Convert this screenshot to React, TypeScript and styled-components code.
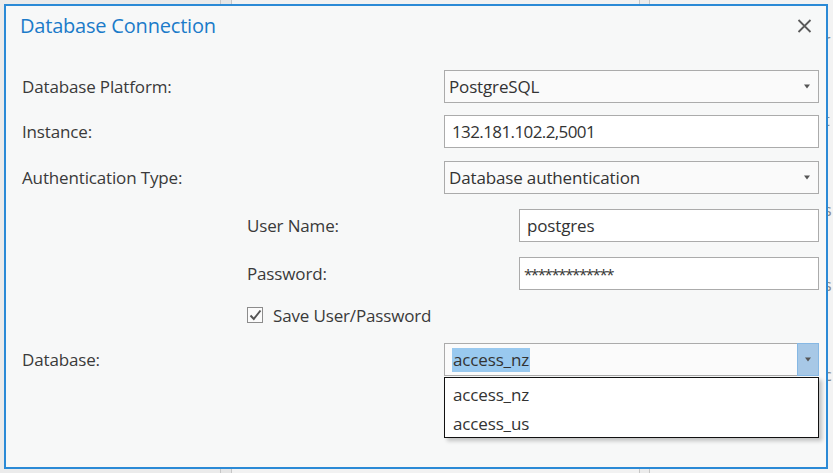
import React from "react";
import styled, { createGlobalStyle } from "styled-components";

const Global = createGlobalStyle`
  html, body { margin: 0; padding: 0; }
  body { width: 833px; height: 473px; overflow: hidden; font-family: "Open Sans", "Noto Sans", sans-serif; }
`;

const Page = styled.div`
  position: relative;
  width: 833px;
  height: 473px;
  background: #ececec;
  overflow: hidden;
`;

const Backdrop = styled.div`
  display: grid;
  grid-template-columns: 220px 1px 10px 1px 407px 1px 9px 1px 1fr;
  height: 100%;
`;

const Pane = styled.div<{ $bg?: string }>`
  background: ${(p) => p.$bg || "#eeeeee"};
`;

const VLine = styled.div`
  background: #c6c6c6;
`;

const RightPane = styled.div`
  background: #f3f3f3;
  display: flex;
  flex-direction: column;
  padding-left: 174px;
  font-size: 16px;
  color: #8a8a8a;
`;

const Peek = styled.div<{ $top: number; $color?: string }>`
  margin-top: ${(p) => p.$top}px;
  line-height: 20px;
  color: ${(p) => p.$color || "#8a8a8a"};
`;

const Dialog = styled.div`
  position: absolute;
  left: 4px;
  top: 4px;
  width: 824px;
  height: 465px;
  box-sizing: border-box;
  border: 2px solid #2b8ad6;
  background: #f7f8f8;
  display: flex;
  flex-direction: column;
`;

const TitleBar = styled.div`
  height: 38px;
  display: flex;
  align-items: center;
  justify-content: space-between;
  padding: 0 14px 0 14px;
`;

const Title = styled.div`
  font-size: 20px;
  color: #1b7bc9;
  letter-spacing: -0.2px;
`;

const CloseButton = styled.div`
  width: 16px;
  height: 16px;
  margin-top: 2px;
  display: flex;
  align-items: center;
  justify-content: center;
`;

const Form = styled.div`
  display: flex;
  flex-direction: column;
  padding: 26px 7px 0 16px;
`;

const Row = styled.div<{ $top?: number; $indent?: number; $field?: number; $h?: number }>`
  display: grid;
  grid-template-columns: 1fr ${(p) => p.$field ?? 375}px;
  align-items: center;
  height: ${(p) => p.$h ?? 33}px;
  margin-top: ${(p) => p.$top ?? 0}px;
  padding-left: ${(p) => p.$indent ?? 0}px;
`;

const Label = styled.div`
  font-size: 17px;
  color: #3a3a3a;
  letter-spacing: -0.15px;
`;

const Box = styled.div<{ $bg?: string; $pad?: number }>`
  position: relative;
  height: 33px;
  box-sizing: border-box;
  border: 1px solid #ababab;
  background: ${(p) => p.$bg || "#ffffff"};
  display: flex;
  align-items: center;
  padding-left: ${(p) => p.$pad ?? 7}px;
  font-size: 17px;
  color: #333;
  letter-spacing: -0.15px;
`;

const BoxText = styled.span<{ $spacing?: number; $size?: number }>`
  flex: 1;
  ${(p) => (p.$spacing !== undefined ? `letter-spacing: ${p.$spacing}px;` : "")}
  ${(p) => (p.$size !== undefined ? `font-size: ${p.$size}px;` : "")}
`;

const Arrow = styled.div`
  width: 22px;
  height: 100%;
  display: flex;
  align-items: center;
  justify-content: center;
`;

const ComboButton = styled.div`
  width: 22px;
  height: 33px;
  margin: -1px -1px -1px 0;
  box-sizing: border-box;
  border: 1px solid #86b8e4;
  background: #a7c8e6;
  display: flex;
  align-items: center;
  justify-content: center;
`;

const Selected = styled.span`
  background: #99c9ef;
  line-height: 24px;
  display: inline-block;
  padding: 0 1px;
  margin-left: -1px;
`;

const SelectedWrap = styled.span`
  flex: 1;
`;

const DropList = styled.div`
  position: absolute;
  left: -1px;
  right: -1px;
  top: 33px;
  height: 61px;
  box-sizing: border-box;
  border: 1px solid #111;
  background: #ffffff;
  box-shadow: 3px 3px 4px rgba(0, 0, 0, 0.22);
  padding-top: 2px;
  z-index: 2;
`;

const DropItem = styled.div`
  height: 29px;
  line-height: 29px;
  padding-left: 8px;
  font-size: 17px;
  color: #333;
  letter-spacing: -0.15px;
`;

const CheckRow = styled.div<{ $top: number; $indent: number }>`
  display: flex;
  align-items: center;
  gap: 10px;
  height: 24px;
  margin-top: ${(p) => p.$top}px;
  padding-left: ${(p) => p.$indent}px;
`;

const CheckBox = styled.div`
  width: 16px;
  height: 16px;
  box-sizing: border-box;
  border: 1px solid #8c8c8c;
  background: #fbfbfb;
  display: flex;
  align-items: center;
  justify-content: center;
`;

const Caret = () => (
  <svg width="8" height="5" viewBox="0 0 8 5">
    <path d="M1 0.5 L7 0.5 L4 4.5 Z" fill="#555" />
  </svg>
);

export default function App() {
  return (
    <Page>
      <Global />
      <Backdrop>
        <Pane $bg="#ebebeb" />
        <VLine />
        <Pane $bg="#e6e6e6" />
        <VLine />
        <Pane $bg="#f2f2f2" />
        <VLine />
        <Pane $bg="#ececec" />
        <VLine />
        <RightPane>
          <Peek $top={30}>r</Peek>
          <Peek $top={60}>t</Peek>
          <Peek $top={70}>s</Peek>
          <Peek $top={55}>s</Peek>
          <Peek $top={70}>c</Peek>
          <Peek $top={58} $color="#e0a070">l</Peek>
        </RightPane>
      </Backdrop>
      <Dialog>
        <TitleBar>
          <Title>Database Connection</Title>
          <CloseButton>
            <svg width="15" height="14" viewBox="0 0 15 14">
              <path d="M1.5 1 L13.5 13 M13.5 1 L1.5 13" stroke="#5a5a5a" strokeWidth="1.8" fill="none" />
            </svg>
          </CloseButton>
        </TitleBar>
        <Form>
          <Row>
            <Label>Database Platform:</Label>
            <Box $bg="#fafafa" $pad={4}>
              <BoxText>PostgreSQL</BoxText>
              <Arrow>
                <Caret />
              </Arrow>
            </Box>
          </Row>
          <Row $top={12}>
            <Label>Instance:</Label>
            <Box>
              <BoxText $spacing={-0.6}>132.181.102.2,5001</BoxText>
            </Box>
          </Row>
          <Row $top={13}>
            <Label>Authentication Type:</Label>
            <Box $bg="#fafafa" $pad={4}>
              <BoxText>Database authentication</BoxText>
              <Arrow>
                <Caret />
              </Arrow>
            </Box>
          </Row>
          <Row $top={15} $indent={225} $field={300}>
            <Label>User Name:</Label>
            <Box>
              <BoxText>postgres</BoxText>
            </Box>
          </Row>
          <Row $top={15} $indent={225} $field={300}>
            <Label>Password:</Label>
            <Box $pad={4}>
              <BoxText $size={15} $spacing={-1.4}>*************</BoxText>
            </Box>
          </Row>
          <CheckRow $top={13} $indent={225}>
            <CheckBox>
              <svg width="13" height="12" viewBox="0 0 13 12">
                <path d="M1.5 6.5 L4.8 10 L11.5 1.5" stroke="#555" strokeWidth="2" fill="none" />
              </svg>
            </CheckBox>
            <Label>Save User/Password</Label>
          </CheckRow>
          <Row $top={16}>
            <Label>Database:</Label>
            <Box $pad={8} $bg="#fbfbfb">
              <SelectedWrap>
                <Selected>access_nz</Selected>
              </SelectedWrap>
              <ComboButton>
                <Caret />
              </ComboButton>
              <DropList>
                <DropItem>access_nz</DropItem>
                <DropItem>access_us</DropItem>
              </DropList>
            </Box>
          </Row>
        </Form>
      </Dialog>
    </Page>
  );
}
